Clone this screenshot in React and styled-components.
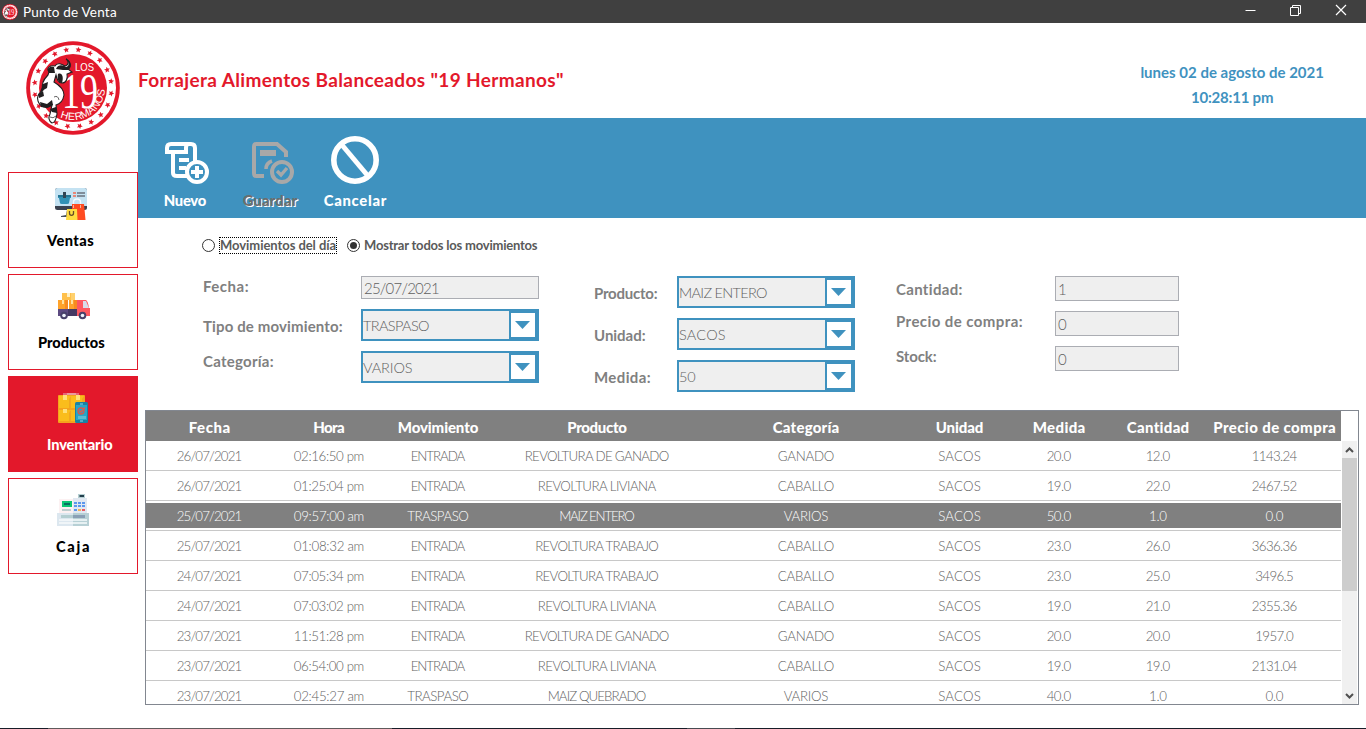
import React, { useLayoutEffect, useRef, useState } from "react";
import styled, { createGlobalStyle, css } from "styled-components";

const BLUE = "#3f92bf";
const RED = "#e3182b";
const GRAY = "#808080";

const GlobalStyle = createGlobalStyle`
  * { box-sizing: border-box; }
  body {
    margin: 0;
    background: #fff;
    font-family: "Century Gothic", Lato, "Open Sans", sans-serif;
    overflow: hidden;
  }
`;

/* Text tracked so that it takes an exact width */
const Tracked = styled.span`
  display: inline-block;
  white-space: pre;
`;

function Fit({ w, children }) {
  const ref = useRef(null);
  const [ls, setLs] = useState(0);
  useLayoutEffect(() => {
    const el = ref.current;
    el.style.letterSpacing = "0px";
    const natural = el.getBoundingClientRect().width;
    const n = String(children).length;
    setLs(n > 1 ? (w + 0.6 - natural) / (n - 1) : 0);
  }, [w, children]);
  return (
    <Tracked ref={ref} style={{ letterSpacing: `${ls}px`, marginRight: `${-ls}px` }}>
      {children}
    </Tracked>
  );
}

const Window = styled.div`
  width: 1366px;
  height: 729px;
  display: flex;
  flex-direction: column;
`;

const TitleBar = styled.div`
  height: 23px;
  flex: none;
  background: #404040;
  color: #fff;
  display: flex;
  align-items: center;
  justify-content: space-between;
  padding: 0 19px 0 2px;
  font-size: 13.5px;
`;

const TitleGroup = styled.div`
  display: flex;
  align-items: center;
  gap: 5px;
  svg { display: block; }
`;

const WindowControls = styled.div`
  display: flex;
  align-items: center;
  gap: 34px;
  padding-bottom: 3px;
`;

const Body = styled.div`
  flex: 1;
  display: flex;
  min-height: 0;
`;

const Sidebar = styled.nav`
  width: 138px;
  flex: none;
  padding: 18px 0 0 8px;
`;

const LogoBox = styled.div`
  height: 131px;
  padding-left: 18px;
  svg { display: block; }
`;

const NavList = styled.div`
  display: flex;
  flex-direction: column;
  gap: 6px;
`;

const NavButton = styled.div`
  height: 96px;
  border: 1px solid ${RED};
  background: ${(p) => (p.$active ? RED : "#fff")};
  color: ${(p) => (p.$active ? "#fff" : "#000")};
  padding-top: ${(p) => p.$top}px;
  svg { display: block; margin-left: ${(p) => p.$iconX}px; }
`;

const NavLabel = styled.div`
  margin: ${(p) => p.$gap}px 0 0 ${(p) => p.$x}px;
  font-size: 14.6px;
  line-height: 18px;
  font-weight: 900;
`;

const Main = styled.main`
  flex: 1;
  min-width: 0;
  display: flex;
  flex-direction: column;
`;

const Header = styled.header`
  height: 95px;
  display: flex;
  justify-content: space-between;
  padding-right: 42px;
`;

const Company = styled.h1`
  margin: 45px 0 0;
  font-size: 19px;
  line-height: 24px;
  font-weight: 700;
  color: ${RED};
`;

const Clock = styled.div`
  margin-top: 37px;
  text-align: center;
  color: ${BLUE};
  font-size: 15px;
  font-weight: 700;
  line-height: 25px;
`;

const Toolbar = styled.div`
  height: 100px;
  background: ${BLUE};
  display: flex;
  padding: 18px 0 0 22px;
`;

const Tool = styled.div`
  width: 50px;
  margin-right: ${(p) => p.$after || 0}px;
  display: flex;
  flex-direction: column;
  align-items: center;
  color: #fff;
  font-size: 14.8px;
  font-weight: 900;
  line-height: 18px;
  svg { display: block; margin-bottom: 7px; flex: none; }
  ${(p) =>
    p.$disabled &&
    css`
      color: #6d6d6d;
      text-shadow: 1px 1px 0 #fff;
    `}
`;

const Filters = styled.div`
  height: 58px;
  padding: 17px 0 0 64px;
  display: flex;
  align-items: flex-start;
  font-size: 13px;
  font-weight: 700;
  color: #5a5a5a;
`;

const RadioOption = styled.label`
  display: flex;
  align-items: center;
  height: 21px;
  margin-right: 10px;
`;

const Radio = styled.span`
  width: 13px;
  height: 13px;
  border: 1px solid #333;
  border-radius: 50%;
  margin-right: 4px;
  display: grid;
  place-items: center;
  &::after {
    content: "";
    width: 7px;
    height: 7px;
    border-radius: 50%;
    background: ${(p) => (p.$checked ? "#333" : "transparent")};
  }
`;

const RadioText = styled.span`
  height: 17px;
  line-height: 15px;
  border: 1px dotted ${(p) => (p.$focused ? "#000" : "transparent")};
  border-left-width: ${(p) => (p.$focused ? 1 : 0)}px;
  width: ${(p) => p.$w}px;
  white-space: nowrap;
`;

const Form = styled.form`
  height: 134px;
  display: flex;
  align-items: flex-start;
  padding-left: 65px;
`;

const FieldColumn = styled.div`
  display: flex;
  flex-direction: column;
  gap: 10px;
  width: ${(p) => p.$w}px;
`;

const Field = styled.div`
  display: flex;
  align-items: flex-start;
`;

const FieldLabel = styled.div`
  width: ${(p) => p.$w}px;
  padding-top: ${(p) => p.$top}px;
  font-size: 15px;
  line-height: 20px;
  font-weight: 700;
  color: ${GRAY};
`;

const Input = styled.div`
  width: ${(p) => p.$w}px;
  height: ${(p) => p.$h}px;
  border: 1px solid #abadb3;
  background: #efefef;
  color: #606060;
  font-size: 15px;
  font-weight: 300;
  line-height: ${(p) => p.$h - 1}px;
  padding-left: 2px;
`;

const Combo = styled.div`
  width: 178px;
  height: 32px;
  border: 2px solid ${BLUE};
  background: #efefef;
  color: #606060;
  display: flex;
  justify-content: space-between;
  font-size: 14.5px;
  font-weight: 300;
  line-height: 30px;
`;

const ComboArrow = styled.span`
  width: 28px;
  height: 28px;
  border: 2px solid ${BLUE};
  background: #fff;
  display: flex;
  justify-content: center;
  padding-top: 8px;
`;

const TableFrame = styled.div`
  width: 1214px;
  height: 295px;
  margin-left: 7px;
  border: 1px solid #828790;
  display: flex;
  overflow: hidden;
`;

const Table = styled.div`
  width: 1195px;
  flex: none;
`;

const columns = "127px 112px 106px 212px 206px 101px 98px 100px 133px";

const HeadRow = styled.div`
  height: 30px;
  display: grid;
  grid-template-columns: ${columns};
  background: ${GRAY};
  color: #fff;
  font-size: 15px;
  font-weight: 900;
  line-height: 33px;
  text-align: center;
`;

const Row = styled.div`
  height: 30px;
  padding: 2px 0;
  border-bottom: 1px solid #c8c8c8;
`;

const RowCells = styled.div`
  height: 25px;
  display: grid;
  grid-template-columns: ${columns};
  background: ${(p) => (p.$selected ? GRAY : "#fff")};
  color: ${(p) => (p.$selected ? "#fff" : "#626262")};
  font-size: 13.3px;
  font-weight: 300;
  line-height: 26px;
  text-align: center;
`;

const ScrollBar = styled.div`
  width: 15px;
  height: 263px;
  margin: 30px 0 0 1px;
  background: #f0f0f0;
  display: flex;
  flex-direction: column;
`;

const ScrollThumb = styled.div`
  height: 133px;
  background: #cdcdcd;
`;

const ScrollButton = styled.div`
  height: 17px;
  display: grid;
  place-items: center;
  margin-top: ${(p) => (p.$end ? "auto" : 0)};
`;

const Taskbar = styled.div`
  height: 1px;
  flex: none;
  background: #171d28;
  display: flex;
`;

const TaskSegment = styled.span`
  height: 1px;
  margin-left: ${(p) => p.$before}px;
  width: ${(p) => p.$w}px;
  background: ${(p) => p.$color};
`;

const starPath = (cx, cy, r, rot) => {
  let d = "";
  for (let i = 0; i < 10; i++) {
    const a = rot + (i * Math.PI) / 5;
    const q = i % 2 ? r * 0.45 : r;
    d += `${i ? "L" : "M"}${(cx + q * Math.sin(a)).toFixed(2)} ${(cy - q * Math.cos(a)).toFixed(2)}`;
  }
  return d + "Z";
};

function Logo({ size, small }) {
  const stars = [];
  for (let i = 0; i < 20; i++) {
    const a = ((i * 18 + 8) * Math.PI) / 180;
    stars.push(starPath(47 + 38.6 * Math.sin(a), 47 - 38.6 * Math.cos(a), 3.1, a));
  }
  return (
    <svg width={size} height={size} viewBox="0 0 94 94">
      <circle cx="47" cy="47" r="46.8" fill={RED} />
      <circle cx="47" cy="47" r="43" fill="#fff" />
      <path d={stars.join("")} fill={RED} />
      <circle cx="47" cy="47" r="34" fill={RED} />
      {!small && (
        <text x="49" y="30" fontSize="11" fill="#fff" fontFamily="Liberation Sans" textLength="19" lengthAdjust="spacingAndGlyphs">LOS</text>
      )}
      <text x="36" y="67" fontSize="50" fill="#fff" fontFamily="Liberation Serif" textLength="36" lengthAdjust="spacingAndGlyphs">19</text>
      {!small &&
        "HERMANOS".split("").map((c, i) => (
          <text
            key={i}
            transform={`rotate(${17 - i * 14} 47 47) translate(47 79)`}
            textAnchor="middle"
            fontSize="10.5"
            fill="#fff"
            fontFamily="Liberation Sans"
          >
            {c}
          </text>
        ))}
      <path d="M23 31C20 27 24 24 29 25C31 21 36 23 39 25C43 24 43 20 40 18C45 20 45 26 42 28L46 31L41 33C42 38 40 42 36 42C32 42 31 38 30 34L28 41C33 44 38 49 38 54C37 60 34 63 30 64L31 73C30 79 28 82 26 82C23 80 22 77 24 73L26 64C20 68 14 66 12 60C10 55 13 52 17 49C15 44 17 39 22 34Z" fill="#fff" stroke="#211f20" strokeWidth="1.1" />
      <path d="M23 32C20 27 24 25 28 26L29 32ZM30 28C32 23 37 24 40 26C44 25 43 21 40 18C46 20 46 27 42 29L37 29ZM32 33C36 31 38 36 36 42C32 42 31 37 32 33ZM17 43L22 41L21 47L14 51ZM12 53L17 50L18 55L13 57ZM14 61L21 63L26 59L27 64L21 67L15 66ZM24 68L30 66L31 72L26 71Z" fill="#211f20" />
      <path d="M28 56Q32 54 33 59M24 76Q27 78 30 75" stroke="#211f20" strokeWidth=".7" fill="none" />
    </svg>
  );
}

const VentasIcon = () => (
  <svg width="32" height="32" viewBox="0 0 32 32">
    <rect width="32" height="22" rx="2.5" fill="#3a4250" />
    <path d="M2.5 0H29.5Q32 0 32 2.5V18H0V2.5Q0 0 2.5 0Z" fill="#c4e2f2" />
    <path d="M12 22H19V28H14V29H6V28L11 27Z" fill="#46505f" />
    <path d="M3 7H16V10H15L14 15Q14 16 12 16H7Q5 16 5 15L4 10H3Z" fill="#3191b5" />
    <path d="M3 7H16V9H3Z" fill="#247796" />
    <path d="M8 4H11V10H8Z" fill="#314554" />
    <path d="M18 5H21M18 8H21" stroke="#f36b50" strokeWidth="1.3" />
    <path d="M22 5H30M22 8H30" stroke="#69717e" strokeWidth="1.3" />
    <path d="M18.5 19V14.5Q18.5 11 22 11T25.5 14.5V19" fill="none" stroke="#f4faff" strokeWidth="1.4" />
    <path d="M17 16H29L30.5 32H17Z" fill="#ff4c21" />
    <path d="M18.5 17V20M25.5 17V20" stroke="#e8b8a7" />
    <path d="M12 21H22L22.5 32H11Z" fill="#ffdc41" />
    <path d="M14.5 23V25.2Q14.5 27.3 16.5 27.3T18.5 25.2V23" fill="none" stroke="#654b29" strokeWidth="1.3" />
  </svg>
);

const ProductosIcon = () => (
  <svg width="32" height="28" viewBox="0 0 32 28">
    <path d="M4 1H17V8H4Z" fill="#ffc04b" />
    <path d="M9 1H12V5H9Z" fill="#fff0c4" />
    <path d="M13 1H17V8H13Z" fill="#ffd16e" />
    <path d="M0 8H10V17H0ZM11 8H19V17H11Z" fill="#ffa32b" />
    <path d="M7 8H10V17H7ZM16 8H19V17H16Z" fill="#f88b21" />
    <path d="M4 8H6V12H4ZM13 8H15V12H13Z" fill="#ffe0a0" />
    <path d="M0 17H11V24H0Z" fill="#5c4a81" />
    <path d="M10 17H20V24H10Z" fill="#453963" />
    <path d="M19 8H28Q30 9 31 16H32V24H19Z" fill="#ff5960" />
    <path d="M25 9H28L31 16H25Z" fill="#d8deea" />
    <circle cx="6" cy="23.5" r="3.8" fill="#48416a" /><circle cx="6" cy="23.5" r="1.8" fill="#eef2fb" />
    <circle cx="24.5" cy="23.5" r="3.8" fill="#48416a" /><circle cx="24.5" cy="23.5" r="1.8" fill="#eef2fb" />
  </svg>
);

const InventarioIcon = () => (
  <svg width="31" height="31" viewBox="0 0 31 31">
    <path d="M5 0H21V3H5Z" fill="#e66476" />
    <path d="M9 0H18V2H9Z" fill="#e99a9f" />
    <rect y="2" width="27" height="28" rx="1" fill="#f4a31d" />
    <path d="M1 3H13V15H1ZM13 3H26V15H13ZM1 17H13V28H1ZM13 17H20V28H13Z" fill="#fabd1c" />
    <path d="M11 6L13 3V15H11ZM24 6L26 3V11H24ZM11 20L13 17V28H11Z" fill="#f2a81f" />
    <path d="M5 2H9V7H5ZM18 2H22V7H18ZM5 16H9V20H5Z" fill="#ffe178" />
    <rect x="17" y="9" width="13" height="21" rx="1.5" fill="#1882a3" />
    <path d="M18 12H29V27H18Z" fill="#27a5c7" />
    <path d="M22 11H25M22 28H25" stroke="#8ed5e7" />
    <circle cx="23" cy="18" r="3" fill="none" stroke="#d35b51" strokeWidth="1.3" />
    <path d="M21.5 17.5L23 19L27 14.5" fill="none" stroke="#e05b4e" strokeWidth="1.3" />
    <path d="M20 23H28V26H20Z" fill="#5fbbd0" />
  </svg>
);

const CajaIcon = () => (
  <svg width="32" height="32" viewBox="0 0 32 32">
    <path d="M21 0H28V5H21Z" fill="#b5cfd2" /><path d="M22.5 1H27V3H22.5Z" fill="#233f4c" />
    <path d="M2 5H17V19H2Z" fill="#fcf1f2" /><path d="M16 4H30V19H16Z" fill="#e1e8f1" />
    <path d="M5 7H15V13H5Z" fill="#0cc774" /><path d="M7 9H13V11H7Z" fill="#086e61" />
    <path d="M5 15H14V17H5Z" fill="#bdcdce" />
    <path d="M17 8H20V10H17ZM21 8H24V10H21ZM25 8H28V10H25ZM17 11H20V13H17ZM21 11H24V13H21ZM25 11H28V13H25ZM17 15H20V17H17Z" fill="#5c97ed" />
    <path d="M21 15H24V17H21Z" fill="#f2b453" /><path d="M25 15H28V17H25Z" fill="#ec5961" />
    <path d="M0 19H32V32H0Z" fill="#dce7ef" /><path d="M16 19H32V32H16Z" fill="#b7d0d5" />
    <path d="M4 21H16V24H4Z" fill="#b4ced1" /><path d="M16 21H28V24H16Z" fill="#8aa0b5" />
    <path d="M2 26H30M2 29H30" stroke="#f6fafc" strokeWidth="1.4" />
  </svg>
);

const NuevoIcon = () => (
  <svg width="48" height="48" viewBox="0 0 48 48" fill="none" stroke="#fff" strokeWidth="4">
    <path d="M6 18V12Q6 8 10 8H30Q34 8 34 12V25M6 16H25V12Q25 9 27 8M12 17V37Q12 40 16 40H26" />
    <path d="M18 24H28M18 32H25" />
    <circle cx="36" cy="36" r="10" />
    <path d="M36 30V42M30 36H42" />
  </svg>
);

const GuardarIcon = () => (
  <svg width="48" height="48" viewBox="0 0 48 48" fill="none" stroke="#a8a8a8" strokeWidth="4">
    <path d="M18 40H10Q8 40 8 37V11Q8 8 10 8H31L40 16V21" />
    <path d="M14 17H30" strokeWidth="6" />
    <path d="M20 33Q20 27 26 25" strokeWidth="3.5" />
    <circle cx="36" cy="36" r="10" />
    <path d="M31 35L35 39L41 32" strokeWidth="3.4" />
  </svg>
);

const CancelarIcon = () => (
  <svg width="48" height="48" viewBox="0 0 48 48" fill="none" stroke="#fff" strokeWidth="5.6">
    <circle cx="24" cy="24" r="21.2" />
    <path d="M11 9L37 40" strokeWidth="5" />
  </svg>
);

const nav = [
  { label: "Ventas", w: 46, x: 38, gap: 12, top: 15, iconX: 46, Icon: VentasIcon },
  { label: "Productos", w: 66, x: 29, gap: 14, top: 17, iconX: 49, Icon: ProductosIcon },
  { label: "Inventario", w: 65, x: 38, gap: 12, top: 16, iconX: 49, Icon: InventarioIcon, active: true },
  { label: "Caja", w: 33, x: 47, gap: 12, top: 15, iconX: 48, Icon: CajaIcon },
];

const heads = [
  ["Fecha", 41], ["Hora", 31], ["Movimiento", 80], ["Producto", 59], ["Categoría", 66],
  ["Unidad", 47], ["Medida", 52], ["Cantidad", 62], ["Precio de compra", 122],
];

const rows = [
  ["26/07/2021", "02:16:50 pm", "ENTRADA", "REVOLTURA DE GANADO", "GANADO", "SACOS", "20.0", "12.0", "1143.24"],
  ["26/07/2021", "01:25:04 pm", "ENTRADA", "REVOLTURA LIVIANA", "CABALLO", "SACOS", "19.0", "22.0", "2467.52"],
  ["25/07/2021", "09:57:00 am", "TRASPASO", "MAIZ ENTERO", "VARIOS", "SACOS", "50.0", "1.0", "0.0"],
  ["25/07/2021", "01:08:32 am", "ENTRADA", "REVOLTURA TRABAJO", "CABALLO", "SACOS", "23.0", "26.0", "3636.36"],
  ["24/07/2021", "07:05:34 pm", "ENTRADA", "REVOLTURA TRABAJO", "CABALLO", "SACOS", "23.0", "25.0", "3496.5"],
  ["24/07/2021", "07:03:02 pm", "ENTRADA", "REVOLTURA LIVIANA", "CABALLO", "SACOS", "19.0", "21.0", "2355.36"],
  ["23/07/2021", "11:51:28 pm", "ENTRADA", "REVOLTURA DE GANADO", "GANADO", "SACOS", "20.0", "20.0", "1957.0"],
  ["23/07/2021", "06:54:00 pm", "ENTRADA", "REVOLTURA LIVIANA", "CABALLO", "SACOS", "19.0", "19.0", "2131.04"],
  ["23/07/2021", "02:45:27 am", "TRASPASO", "MAIZ QUEBRADO", "VARIOS", "SACOS", "40.0", "1.0", "0.0"],
];

const textWidths = {
  ENTRADA: 54, TRASPASO: 61, "REVOLTURA DE GANADO": 144, "REVOLTURA LIVIANA": 118,
  "MAIZ ENTERO": 75, "REVOLTURA TRABAJO": 123, "MAIZ QUEBRADO": 98,
  GANADO: 56, CABALLO: 56, VARIOS: 44, SACOS: 42,
};

const cellWidth = (text, col) => {
  if (col === 0) return 65;
  if (col === 1) return 70;
  return textWidths[text] || text.length * 6.9 - 3.5;
};

function TextField({ label, lw, labelCol, top, value, vw, w, h }) {
  return (
    <Field>
      <FieldLabel $w={labelCol} $top={top}><Fit w={lw}>{label}</Fit></FieldLabel>
      <Input $w={w} $h={h}><Fit w={vw}>{value}</Fit></Input>
    </Field>
  );
}

function ComboField({ label, lw, labelCol, top, value, vw }) {
  return (
    <Field>
      <FieldLabel $w={labelCol} $top={top}><Fit w={lw}>{label}</Fit></FieldLabel>
      <Combo>
        <Fit w={vw}>{value}</Fit>
        <ComboArrow>
          <svg width="16" height="8" viewBox="0 0 16 8"><path d="M0 0H15L7.5 8Z" fill={BLUE} /></svg>
        </ComboArrow>
      </Combo>
    </Field>
  );
}

export default function App() {
  return (
    <Window>
      <GlobalStyle />
      <TitleBar>
        <TitleGroup>
          <Logo size={16} small />
          <Fit w={93}>Punto de Venta</Fit>
        </TitleGroup>
        <WindowControls>
          <svg width="11" height="11"><path d="M0.5 5.5H10.5" stroke="#fff" /></svg>
          <svg width="11" height="11" fill="none" stroke="#fff"><path d="M.5 2.5H8.5V10.5H.5ZM2.5 2.5V.5H10.5V8.5H8.5" /></svg>
          <svg width="12" height="12" fill="none" stroke="#fff" strokeWidth="1.2"><path d="M1 1L11 11M11 1L1 11" /></svg>
        </WindowControls>
      </TitleBar>
      <Body>
        <Sidebar>
          <LogoBox><Logo size={94} /></LogoBox>
          <NavList>
            {nav.map(({ label, w, x, gap, top, iconX, Icon, active }) => (
              <NavButton key={label} $active={active} $top={top} $iconX={iconX}>
                <Icon />
                <NavLabel $x={x} $gap={gap}><Fit w={w}>{label}</Fit></NavLabel>
              </NavButton>
            ))}
          </NavList>
        </Sidebar>
        <Main>
          <Header>
            <Company><Fit w={425}>{'Forrajera Alimentos Balanceados "19 Hermanos"'}</Fit></Company>
            <Clock>
              <div><Fit w={183}>lunes 02 de agosto de 2021</Fit></div>
              <div><Fit w={82}>10:28:11 pm</Fit></div>
            </Clock>
          </Header>
          <Toolbar>
            <Tool $after={35}><NuevoIcon /><Fit w={42}>Nuevo</Fit></Tool>
            <Tool $disabled $after={35}><GuardarIcon /><Fit w={54}>Guardar</Fit></Tool>
            <Tool><CancelarIcon /><Fit w={62}>Cancelar</Fit></Tool>
          </Toolbar>
          <Filters>
            <RadioOption>
              <Radio />
              <RadioText $focused $w={118}><Fit w={115.5}>Movimientos del día</Fit></RadioText>
            </RadioOption>
            <RadioOption>
              <Radio $checked />
              <RadioText $w={178}><Fit w={173}>Mostrar todos los movimientos</Fit></RadioText>
            </RadioOption>
          </Filters>
          <Form>
            <FieldColumn $w={391}>
              <TextField label="Fecha:" lw={45} labelCol={158} top={0} value="25/07/2021" vw={75} w={178} h={23} />
              <ComboField label="Tipo de movimiento:" lw={139} labelCol={158} top={7} value="TRASPASO" vw={66} />
              <ComboField label="Categoría:" lw={70} labelCol={158} top={0} value="VARIOS" vw={49} />
            </FieldColumn>
            <FieldColumn $w={302}>
              <ComboField label="Producto:" lw={63} labelCol={83} top={7} value="MAIZ ENTERO" vw={88} />
              <ComboField label="Unidad:" lw={51} labelCol={83} top={7} value="SACOS" vw={46} />
              <ComboField label="Medida:" lw={56} labelCol={83} top={7} value="50" vw={16} />
            </FieldColumn>
            <FieldColumn $w={283}>
              <TextField label="Cantidad:" lw={66} labelCol={159} top={3} value="1" vw={7} w={124} h={25} />
              <TextField label="Precio de compra:" lw={126} labelCol={159} top={0} value="0" vw={7} w={124} h={25} />
              <TextField label="Stock:" lw={40} labelCol={159} top={0} value="0" vw={7} w={124} h={25} />
            </FieldColumn>
          </Form>
          <TableFrame>
            <Table>
              <HeadRow>
                {heads.map(([t, w]) => <div key={t}><Fit w={w}>{t}</Fit></div>)}
              </HeadRow>
              {rows.map((r, i) => (
                <Row key={i}>
                  <RowCells $selected={i === 2}>
                    {r.map((c, j) => <div key={j}><Fit w={cellWidth(c, j)}>{c}</Fit></div>)}
                  </RowCells>
                </Row>
              ))}
            </Table>
            <ScrollBar>
              <ScrollButton>
                <svg width="9" height="6" fill="none" stroke="#505050" strokeWidth="2"><path d="M1 5L4.5 1.5L8 5" /></svg>
              </ScrollButton>
              <ScrollThumb />
              <ScrollButton $end>
                <svg width="9" height="6" fill="none" stroke="#505050" strokeWidth="2"><path d="M1 1L4.5 4.5L8 1" /></svg>
              </ScrollButton>
            </ScrollBar>
          </TableFrame>
        </Main>
      </Body>
      <Taskbar>
        <TaskSegment $before={48} $w={344} $color="#5e5a5b" />
        <TaskSegment $before={295} $w={48} $color="#484b52" />
      </Taskbar>
    </Window>
  );
}
